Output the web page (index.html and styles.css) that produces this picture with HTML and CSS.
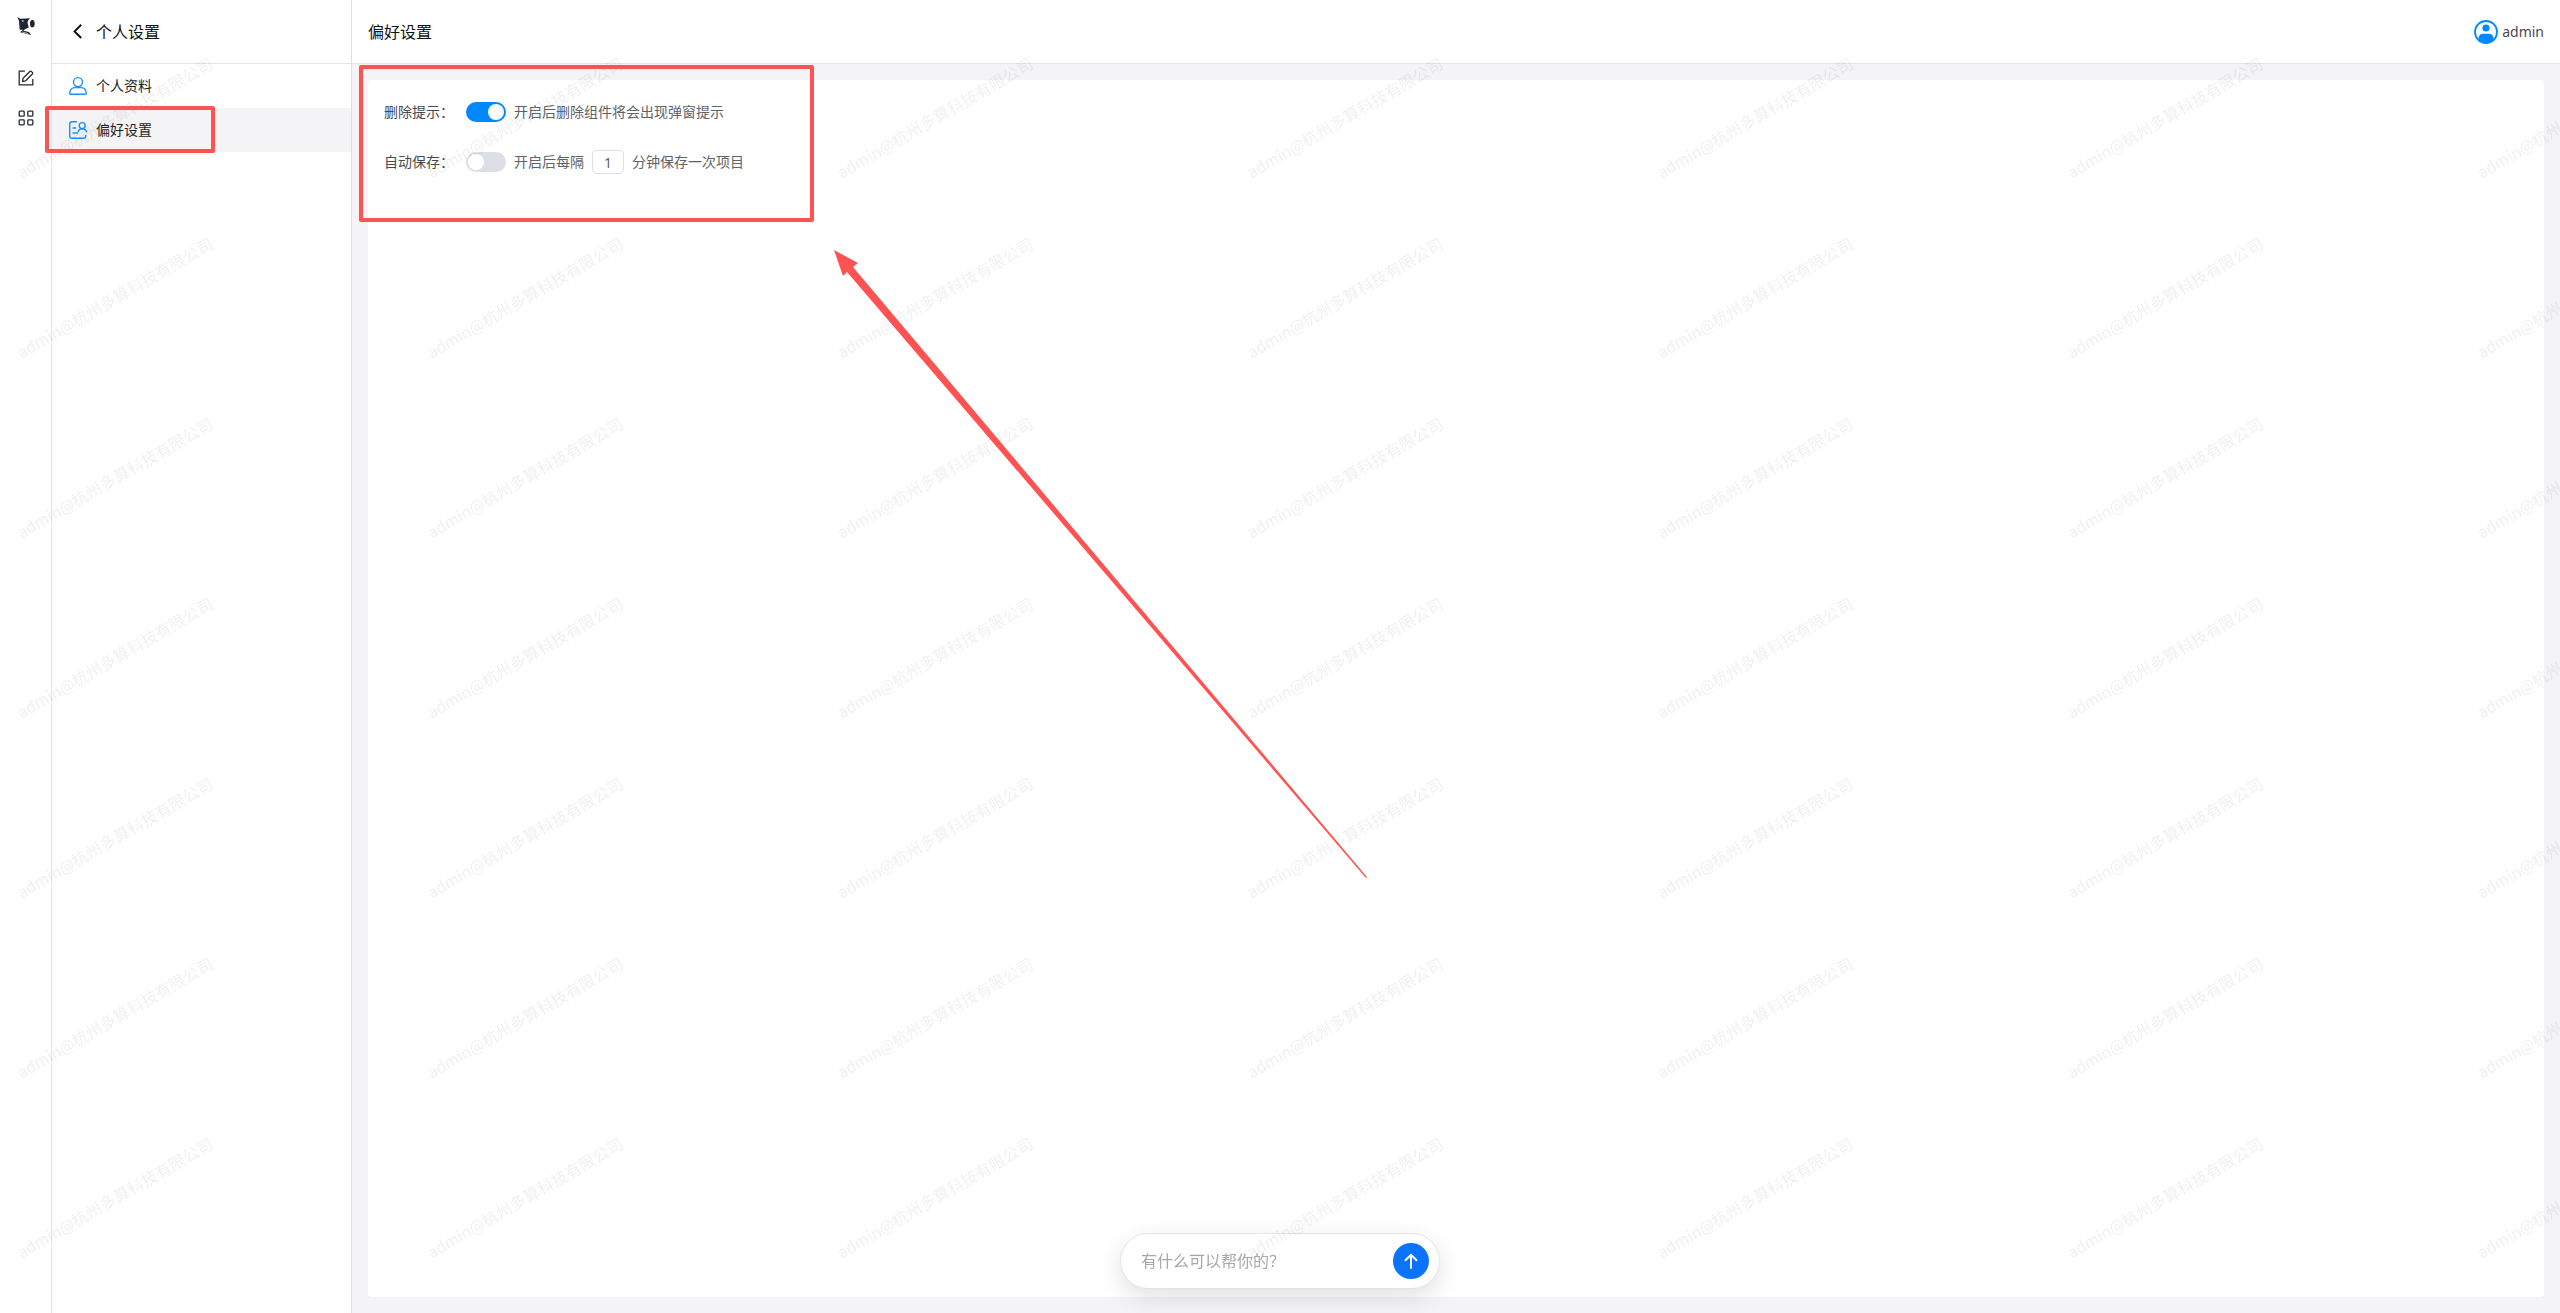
FILE: index.html
```html
<!DOCTYPE html>
<html lang="zh-CN">
<head>
<meta charset="utf-8">
<meta name="viewport" content="width=device-width, initial-scale=1">
<title>偏好设置</title>
<link rel="stylesheet" href="styles.css">
</head>
<body>
<div class="app">
  <nav class="rail" aria-label="主导航">
    <a class="rail-logo" href="#" aria-label="首页">
      <svg width="18" height="18" viewBox="0 0 54 54" fill="#1f2430">
        <path d="M1 0 L10 5 L39 4 Q32 10 32 19 Q33 27 36 31 L24 37 L19 41 L36 45 L42 54 L9 46 L18 38 L8 38 L6 12 Z"/>
        <ellipse cx="46" cy="20" rx="7" ry="11"/>
        <path d="M14 10 L21 11 L17 15 Z" fill="#fff"/>
        <path d="M16 45 L34 50" stroke="#fff" stroke-width="2"/>
      </svg>
    </a>
    <a class="rail-link" href="#" aria-label="编辑">
      <svg width="16" height="16" viewBox="0 0 16 16" fill="none" stroke="#262b33" stroke-width="1.3">
        <path d="M7 1.2H1.2V14.8H14.8V9"/>
        <path d="M4.6 11.5 L5 8.4 L11.8 1.5 Q12.6.8 13.5 1.6 L14.3 2.4 Q15 3.2 14.3 4 L7.5 10.9 Z"/>
      </svg>
    </a>
    <a class="rail-link" href="#" aria-label="应用">
      <svg width="16" height="16" viewBox="0 0 16 16" fill="none" stroke="#262b33" stroke-width="1.3">
        <rect x="1.2" y="1.2" width="5" height="5" rx=".8"/><rect x="9.8" y="1.2" width="5" height="5" rx=".8"/>
        <rect x="1.2" y="9.8" width="5" height="5" rx=".8"/><rect x="9.8" y="9.8" width="5" height="5" rx=".8"/>
      </svg>
    </a>
  </nav>

  <aside class="side">
    <header class="side-head">
      <button class="back" type="button" aria-label="返回">
        <svg width="20" height="20" viewBox="0 0 20 20" fill="none" stroke="#111" stroke-width="2"><path d="M13.2 2.8 L6.6 9.4 L13.2 16"/></svg>
      </button>
      <h2 class="title">个人设置</h2>
    </header>
    <a class="item" href="#">
      <svg width="20" height="20" viewBox="0 0 20 20" fill="none" stroke="#1890ff" stroke-width="1.4">
        <circle cx="10" cy="6.1" r="4.5"/>
        <path d="M1.7 17.2 C2 13.8 4.2 11.6 7 11.6 H13 C15.8 11.6 18 13.8 18.3 17.2 Q18.3 18.3 17.2 18.3 H2.8 Q1.7 18.3 1.7 17.2Z"/>
      </svg>
      <span>个人资料</span>
    </a>
    <a class="item item-active" href="#" aria-current="page">
      <svg width="20" height="20" viewBox="0 0 20 20" fill="none" stroke="#1890ff" stroke-width="1.4">
        <path d="M9 1.7 H4 Q1.7 1.7 1.7 4 V16 Q1.7 18.3 4 18.3 H15.5 Q17.8 18.3 17.8 16 V14.8"/>
        <path d="M4.5 8 H8.3 M4.5 13 H10"/>
        <circle cx="14.2" cy="5.6" r="3"/>
        <path d="M10.2 12.3 Q10.4 9 14.2 8.8 Q18.2 9 18.6 12.3"/>
      </svg>
      <span>偏好设置</span>
    </a>
  </aside>

  <main class="main">
    <header class="main-head">
      <h1 class="title">偏好设置</h1>
      <a class="account" href="#">
        <svg width="24" height="24" viewBox="0 0 24 24">
          <circle cx="12" cy="12" r="11" fill="#fff" stroke="#0089ff" stroke-width="1.8"/>
          <circle cx="12" cy="8" r="3.6" fill="#0089ff"/>
          <path d="M4.6 20 V17.5 Q5.4 13.8 9 13.8 H15 Q18.6 13.8 19.4 17.5 V20 Q16 23.4 12 23.4 Q8 23.4 4.6 20Z" fill="#0089ff"/>
        </svg>
        <span>admin</span>
      </a>
    </header>
    <div class="content">
      <form class="card">
        <div class="row">
          <label class="row-label" for="confirm-delete">删除提示：</label>
          <input class="switch" type="checkbox" role="switch" id="confirm-delete" checked>
          <span>开启后删除组件将会出现弹窗提示</span>
        </div>
        <div class="row">
          <label class="row-label" for="auto-save">自动保存：</label>
          <input class="switch" type="checkbox" role="switch" id="auto-save">
          <label for="minutes">开启后每隔</label>
          <input class="minutes" type="text" inputmode="numeric" id="minutes" value="1">
          <span>分钟保存一次项目</span>
        </div>
      </form>
    </div>
  </main>
</div>

<form class="ask">
  <input class="ask-input" type="text" aria-label="提问" placeholder="有什么可以帮你的？">
  <button class="ask-send" type="button" aria-label="发送">
    <svg width="20" height="20" viewBox="0 0 20 20" fill="none" stroke="#fff" stroke-width="2" stroke-linecap="round" stroke-linejoin="round"><path d="M10 17 V4 M4.5 9.3 L10 3.8 L15.5 9.3"/></svg>
  </button>
</form>

<svg class="overlay" aria-hidden="true">
  <defs>
    <pattern id="watermark" width="410" height="180" x="-90" y="28" patternUnits="userSpaceOnUse">
      <text class="watermark" x="205" y="96" text-anchor="middle" transform="rotate(-30 205 90)">admin@杭州多算科技有限公司</text>
    </pattern>
  </defs>
  <rect width="100%" height="100%" fill="url(#watermark)"/>
</svg>

<svg class="overlay" aria-hidden="true">
  <g fill="none" stroke="#ff5252" stroke-width="4" stroke-linejoin="round">
    <rect x="47" y="108" width="166" height="43"/>
    <rect x="361" y="67" width="451" height="153"/>
  </g>
  <path fill="#ff5252" d="M834 250 L858 263 L853 267 L1367 877 L1366 878 L847 272 L843 276 Z"/>
</svg>
</body>
</html>
```

FILE: styles.css
```css
* {
  box-sizing: border-box;
}

body {
  margin: 0;
  font: 14px/20px "Noto Sans", "Noto Sans CJK SC", sans-serif;
  color: #303133;
  background: #fff;
}

a {
  color: inherit;
  text-decoration: none;
}

svg {
  display: block;
  flex: none;
}

button,
input {
  margin: 0;
  padding: 0;
  border: 0;
  font: inherit;
  color: inherit;
  background: none;
}

.app {
  display: flex;
  min-height: 100vh;
}

.rail {
  display: flex;
  flex-direction: column;
  align-items: center;
  gap: 24px;
  width: 52px;
  padding-top: 17px;
  border-right: 1px solid #e4e4e7;
}

.rail-logo {
  margin-bottom: 11px;
}

.side {
  width: 300px;
  border-right: 1px solid #dfe0e4;
}

.side-head,
.main-head {
  display: flex;
  align-items: center;
  height: 64px;
  padding: 0 16px;
  border-bottom: 1px solid #e4e4e7;
}

.side-head {
  gap: 8px;
}

.title {
  margin: 0;
  font-size: 16px;
  font-weight: 400;
  line-height: 24px;
  color: #111;
}

.item {
  display: flex;
  align-items: center;
  gap: 8px;
  height: 44px;
  padding: 0 16px;
  color: #1d1d1f;
}

.item-active {
  background: #f4f4f6;
}

.main {
  display: flex;
  flex: 1;
  flex-direction: column;
}

.main-head {
  justify-content: space-between;
}

.account {
  display: flex;
  align-items: center;
  gap: 4px;
  color: #48494d;
}

.content {
  display: flex;
  flex: 1;
  padding: 16px;
  background: #f4f4f6;
}

.card {
  flex: 1;
  padding: 16px;
  border-radius: 4px;
  background: #fff;
}

.row {
  display: flex;
  align-items: center;
  gap: 8px;
  height: 32px;
  margin-bottom: 18px;
  color: #606266;
}

.row-label {
  width: 74px;
  color: #48494d;
}

.switch {
  appearance: none;
  display: flex;
  width: 40px;
  height: 20px;
  padding: 2px;
  border-radius: 10px;
  background: #dcdfe6;
}

.switch::before {
  content: "";
  width: 16px;
  height: 16px;
  border-radius: 50%;
  background: #fff;
}

.switch:checked {
  justify-content: flex-end;
  background: #0089ff;
}

.minutes {
  width: 32px;
  height: 24px;
  border: 1px solid #dcdfe6;
  border-radius: 4px;
  text-align: center;
}

.ask {
  position: fixed;
  bottom: 24px;
  left: 50%;
  display: flex;
  align-items: center;
  width: 320px;
  height: 56px;
  margin-left: -160px;
  padding: 0 10px 0 20px;
  border: 1px solid #e4e4e9;
  border-radius: 28px;
  background: #fff;
  box-shadow: 0 8px 24px rgba(0, 0, 0, 0.12);
}

.ask-input {
  flex: 1;
  min-width: 0;
  font-size: 16px;
  line-height: 24px;
}

.ask-input::placeholder {
  color: #a8a8a8;
}

.ask-send {
  display: grid;
  place-items: center;
  width: 36px;
  height: 36px;
  border-radius: 50%;
  background: #0a74ff;
}

.overlay {
  position: fixed;
  inset: 0;
  width: 100%;
  height: 100%;
  pointer-events: none;
}

.watermark {
  font: 16px "Noto Sans CJK SC", sans-serif;
  fill: rgba(0, 0, 0, 0.06);
}
```
